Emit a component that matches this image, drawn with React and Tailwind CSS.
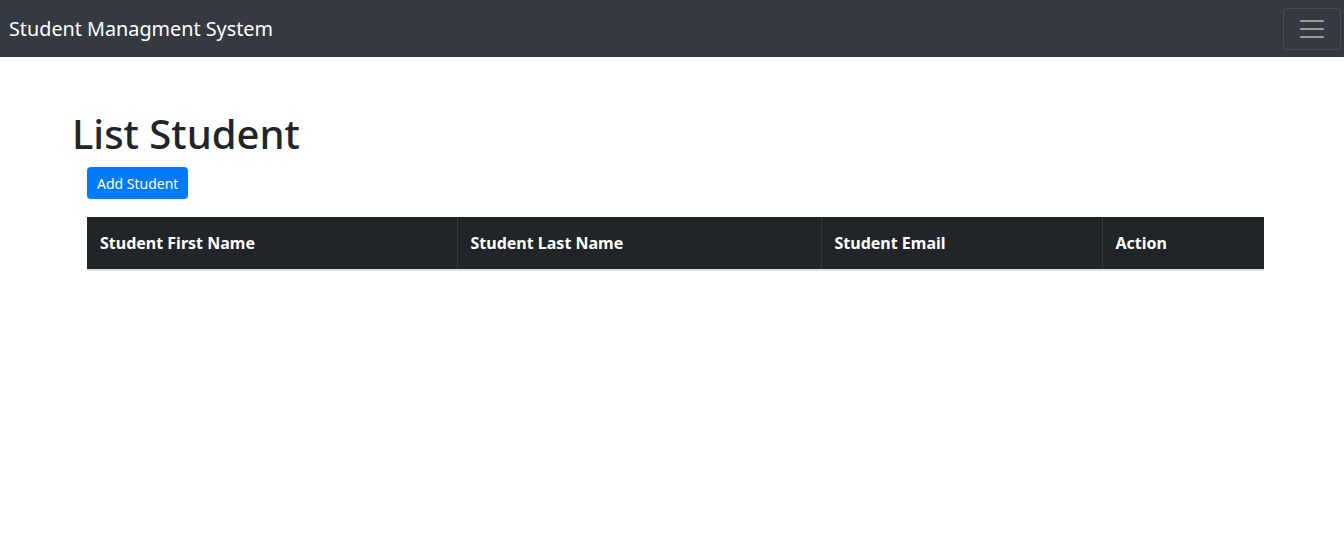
export default function App() {
  const columns = [
    { label: "Student First Name", width: "w-[370px]" },
    { label: "Student Last Name", width: "w-[364px]" },
    { label: "Student Email", width: "w-[281px]" },
    { label: "Action", width: "w-[162px]" },
  ];

  return (
    <div className="min-h-screen bg-white font-['Noto_Sans',sans-serif] text-[#212529]">
      <nav className="flex h-[57px] items-center justify-between bg-[#343a40] pl-[9px] pr-[3px]">
        <span className="text-[19.8px] text-white">Student Managment System</span>
        <button className="flex h-[42px] w-[58px] items-center justify-center rounded-[4px] border border-white/10">
          <svg width="30" height="30" viewBox="0 0 30 30">
            <path
              d="M4 7h22M4 15h22M4 23h22"
              stroke="rgba(255,255,255,0.5)"
              strokeWidth="2"
              strokeLinecap="round"
            />
          </svg>
        </button>
      </nav>

      <div className="pl-[72px] pr-[80px] pt-[53px]">
        <h1 className="text-[40px] font-medium leading-[1.2]">List Student</h1>
        <div className="pl-[15px]">
          <button className="mt-[9px] h-[32px] rounded-[4px] bg-[#007bff] px-[10px] text-[14px] text-white">
            Add Student
          </button>
          <table className="mt-[18px] w-full border-collapse">
            <thead>
              <tr className="bg-[#212529] text-white">
                {columns.map((col, i) => (
                  <th
                    key={col.label}
                    className={`${col.width} h-[53px] border-b-2 border-b-[#dee2e6] px-[13px] pb-[1px] text-left text-[16px] font-bold ${
                      i < columns.length - 1 ? "border-r border-r-[#32383e]" : ""
                    }`}
                  >
                    {col.label}
                  </th>
                ))}
              </tr>
            </thead>
            <tbody></tbody>
          </table>
        </div>
      </div>
    </div>
  );
}
